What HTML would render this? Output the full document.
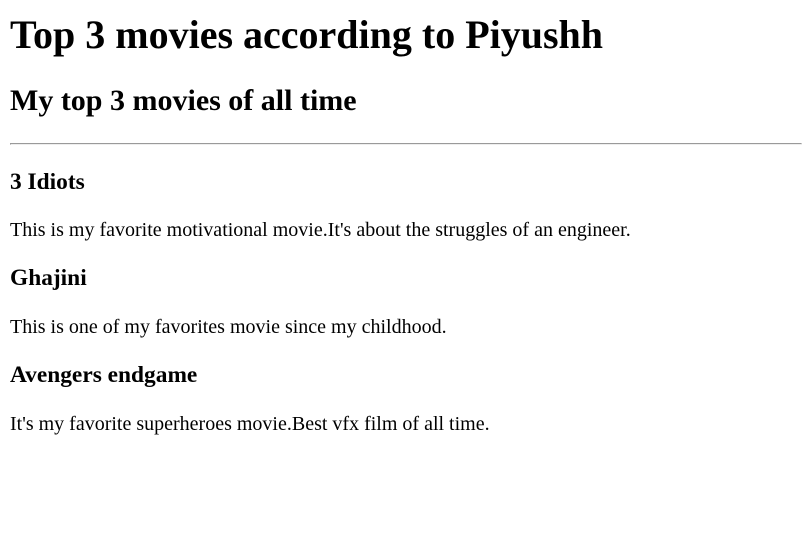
<!DOCTYPE html>
<html><head><style>
html{zoom:1.25}
body{margin:8px;font-family:"Liberation Serif",serif;color:#000;background:#fff}
h1{margin-top:8.4px}
hr{margin-right:-8px}
</style></head><body>
<h1>Top 3 movies according to Piyushh</h1>
<h2>My top 3 movies of all time</h2>
<hr>
<h3>3 Idiots</h3>
<p>This is my favorite motivational movie.It's about the struggles of an engineer.</p>
<h3>Ghajini</h3>
<p>This is one of my favorites movie since my childhood.</p>
<h3>Avengers endgame</h3>
<p>It's my favorite superheroes movie.Best vfx film of all time.</p>
</body></html>
